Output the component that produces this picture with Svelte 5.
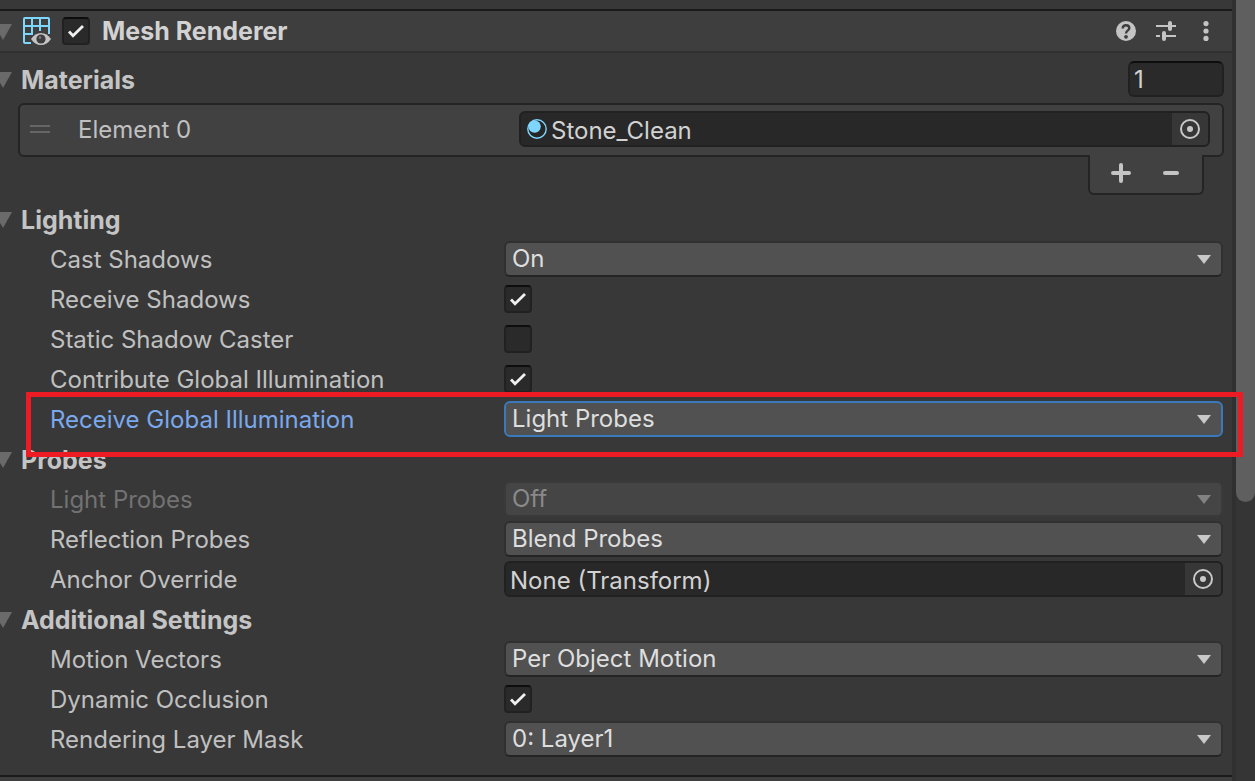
<script>
  let enabled = $state(true);
  let materialCount = $state('1');

  const sections = [
    {
      title: 'Lighting',
      rows: [
        { id: 'cast-shadows', label: 'Cast Shadows', kind: 'select', value: 'On' },
        { id: 'receive-shadows', label: 'Receive Shadows', kind: 'check', checked: true },
        { id: 'static-caster', label: 'Static Shadow Caster', kind: 'check', checked: false },
        { id: 'contribute-gi', label: 'Contribute Global Illumination', kind: 'check', checked: true },
        { id: 'receive-gi', label: 'Receive Global Illumination', kind: 'select', value: 'Light Probes', active: true }
      ]
    },
    {
      title: 'Probes',
      rows: [
        { id: 'light-probes', label: 'Light Probes', kind: 'select', value: 'Off', disabled: true },
        { id: 'reflection-probes', label: 'Reflection Probes', kind: 'select', value: 'Blend Probes' },
        { id: 'anchor-override', label: 'Anchor Override', kind: 'object', value: 'None (Transform)' }
      ]
    },
    {
      title: 'Additional Settings',
      rows: [
        { id: 'motion-vectors', label: 'Motion Vectors', kind: 'select', value: 'Per Object Motion' },
        { id: 'dynamic-occlusion', label: 'Dynamic Occlusion', kind: 'check', checked: true },
        { id: 'layer-mask', label: 'Rendering Layer Mask', kind: 'select', value: '0: Layer1' }
      ]
    }
  ];
</script>

{#snippet foldout()}
  <svg class="foldout" width="18" height="16" viewBox="0 0 18 16" aria-hidden="true">
    <path d="M0 0H18L9 16Z" fill="#6a6a6a" />
  </svg>
{/snippet}

{#snippet picker()}
  <button class="picker" type="button" aria-label="Select object">
    <svg width="20" height="20" viewBox="0 0 20 20" aria-hidden="true">
      <circle cx="10" cy="10" r="9" fill="none" stroke="#c8c8c8" stroke-width="2" />
      <circle cx="10" cy="10" r="3" fill="#c8c8c8" />
    </svg>
  </button>
{/snippet}

{#snippet tick()}
  <svg class="tick" width="18" height="14" viewBox="0 0 18 14" aria-hidden="true">
    <path d="M2 7.5L6 11.7L16 2" fill="none" stroke="#f0f0f0" stroke-width="2.8" />
  </svg>
{/snippet}

<div class="window">
  <main class="panel">
    <header class="component">
      {@render foldout()}
      <svg class="mesh" width="30" height="30" viewBox="0 0 30 30" aria-hidden="true">
        <g fill="none" stroke="#7fd6fd" stroke-width="2">
          <path d="M9 27H3Q2 27 2 26V3Q2 2 3 2H26Q27 2 27 3V18" />
          <path d="M10 2V19M18 2V15M2 10H27M2 18H11" />
        </g>
        <path d="M9 23Q13 17 19 17T29 23Q25 29 19 29T9 23Z" fill="#c4c4c4" />
        <circle cx="19" cy="23" r="4.6" fill="#3e3e3e" />
        <circle cx="18" cy="21.6" r="1.3" fill="#777" />
      </svg>
      <span class="check">
        <input id="enabled" type="checkbox" bind:checked={enabled} />
        {@render tick()}
      </span>
      <label class="title" for="enabled">Mesh Renderer</label>
      <div class="tools">
        <button type="button" aria-label="Help">
          <svg width="20" height="20" viewBox="0 0 20 20">
            <circle cx="10" cy="10" r="10" fill="#c4c4c4" />
            <path d="M6.7 7.5Q6.7 4.2 10 4.2T13.3 7.3C13.3 9.6 10 9.2 10 12.6" fill="none" stroke="#3e3e3e" stroke-width="2.4" />
            <circle cx="10" cy="15.8" r="1.9" fill="#3e3e3e" />
          </svg>
        </button>
        <button type="button" aria-label="Presets">
          <svg width="20" height="20" viewBox="0 0 20 20" stroke="#c4c4c4">
            <path d="M0 5H14M16 5H20M0 15H4M8 15H20" stroke-width="2" />
            <path d="M14 2V8M8 12V18" stroke-width="4" stroke-linecap="round" />
          </svg>
        </button>
        <button type="button" aria-label="More options">
          <svg width="20" height="20" viewBox="0 0 20 20" fill="#c4c4c4">
            <circle cx="10" cy="2.6" r="2.6" /><circle cx="10" cy="10" r="2.6" /><circle cx="10" cy="17.4" r="2.6" />
          </svg>
        </button>
      </div>
    </header>

    <section class="materials">
      <div class="heading">
        {@render foldout()}
        <h2><label for="count">Materials</label></h2>
        <input id="count" class="count" type="text" bind:value={materialCount} />
      </div>
      <div class="list">
        <svg class="grip" width="20" height="8" viewBox="0 0 20 8" aria-hidden="true">
          <path d="M0 1H20M0 7H20" stroke="#666" stroke-width="2" />
        </svg>
        <span class="element">Element 0</span>
        <div class="object">
          <svg class="ball" width="20" height="20" viewBox="0 0 20 20" aria-hidden="true">
            <circle cx="10" cy="10" r="9.2" fill="#262626" stroke="#7fd6fd" stroke-width="1.4" />
            <circle cx="7.6" cy="7.6" r="6.2" fill="#7fd6fd" />
          </svg>
          <span class="value">Stone_Clean</span>
          {@render picker()}
        </div>
      </div>
      <div class="list-footer">
        <button type="button" aria-label="Add element">
          <svg width="20" height="20" viewBox="0 0 20 20"><path d="M2 10H18M10 2V18" stroke="#c4c4c4" stroke-width="4" stroke-linecap="round" /></svg>
        </button>
        <button type="button" aria-label="Remove element">
          <svg width="20" height="20" viewBox="0 0 20 20"><path d="M4 10H16" stroke="#c4c4c4" stroke-width="4" stroke-linecap="round" /></svg>
        </button>
      </div>
    </section>

    {#each sections as section}
      <section>
        <div class="heading">
          {@render foldout()}
          <h2>{section.title}</h2>
        </div>
        {#each section.rows as row}
          <div class="row" class:active={row.active} class:disabled={row.disabled}>
            {#if row.kind === 'object'}
              <span class="label">{row.label}</span>
              <div class="object">
                <span class="value">{row.value}</span>
                {@render picker()}
              </div>
            {:else if row.kind === 'check'}
              <label class="label" for={row.id}>{row.label}</label>
              <span class="check">
                <input id={row.id} type="checkbox" checked={row.checked} />
                {@render tick()}
              </span>
            {:else}
              <label class="label" for={row.id}>{row.label}</label>
              <span class="dropdown">
                <select id={row.id} disabled={row.disabled}>
                  <option>{row.value}</option>
                </select>
                <svg class="arrow" width="14" height="9" viewBox="0 0 14 9" aria-hidden="true">
                  <path d="M0 0H14L7 9Z" fill="currentColor" />
                </svg>
              </span>
            {/if}
          </div>
        {/each}
      </section>
    {/each}
    <div class="next"></div>
  </main>
  <div class="scrollbar"><div class="thumb"></div></div>
</div>

<style>
  :global(body) {
    margin: 0;
    background: #383838;
  }
  .window {
    display: flex;
    min-height: 100vh;
    overflow: hidden;
    font-family: Inter, sans-serif;
    font-size: 24px;
    line-height: 32px;
    color: #c0c0c0;
  }
  .window * {
    box-sizing: border-box;
  }
  button, input, select {
    margin: 0;
    padding: 0;
    border: 0;
    background: none;
    font: inherit;
    color: inherit;
    appearance: none;
    outline: none;
  }
  svg {
    display: block;
    flex: none;
  }
  .panel {
    flex: 1;
    min-width: 0;
    display: flex;
    flex-direction: column;
    padding-top: 9px;
  }
  .component {
    display: flex;
    align-items: center;
    height: 44px;
    padding-right: 16px;
    border-top: 2px solid #1a1a1a;
    border-bottom: 2px solid #303030;
    background: #3e3e3e;
  }
  .foldout {
    margin: 2px 0 0 -6px;
  }
  .mesh {
    margin: 0 10px;
  }
  .title,
  h2 {
    font-size: 25px;
    font-weight: 700;
    color: #c4c4c4;
  }
  .title {
    margin-left: 12px;
    color: #d2d2d2;
  }
  .tools {
    display: flex;
    gap: 20px;
    margin-left: auto;
  }
  .check {
    position: relative;
    width: 28px;
    height: 28px;
  }
  .check input {
    display: block;
    width: 28px;
    height: 28px;
    border: 2px solid #212121;
    border-top-color: #0d0d0d;
    border-radius: 4px;
    background: #2a2a2a;
  }
  .tick {
    position: absolute;
    top: 7px;
    left: 5px;
    pointer-events: none;
    visibility: hidden;
  }
  input:checked + .tick {
    visibility: visible;
  }
  .materials {
    padding: 6px 0 4px;
  }
  .heading {
    display: flex;
    align-items: center;
    height: 40px;
    padding-right: 8px;
  }
  h2 {
    margin: 0;
    padding: 2px 0 0 9px;
  }
  .count {
    width: 96px;
    height: 36px;
    margin-left: auto;
    padding-left: 4px;
    border: 2px solid #212121;
    border-top-color: #0d0d0d;
    border-radius: 6px;
    background: #2a2a2a;
    color: #d2d2d2;
  }
  .list {
    display: flex;
    align-items: center;
    height: 54px;
    margin: 4px 8px 0 18px;
    padding: 0 12px 2px 10px;
    border: 2px solid #242424;
    border-radius: 6px;
    background: #414141;
  }
  .element {
    flex: none;
    width: 469px;
    padding: 2px 0 0 28px;
  }
  .object {
    flex: 1;
    display: flex;
    align-items: center;
    height: 36px;
    min-width: 0;
    padding-left: 4px;
    overflow: hidden;
    border: 2px solid #212121;
    border-radius: 6px;
    background: #282828;
    color: #d2d2d2;
  }
  .ball {
    margin: 0 4px 0 2px;
  }
  .value {
    flex: 1;
    padding-top: 3px;
  }
  .picker {
    display: grid;
    place-items: center;
    width: 36px;
    height: 32px;
    background: #373737;
  }
  .list-footer {
    position: relative;
    display: flex;
    gap: 30px;
    width: 116px;
    height: 40px;
    margin: -2px 28px 0 auto;
    padding: 0 0 2px 21px;
    border: 2px solid #242424;
    border-top: 0;
    border-radius: 0 0 6px 6px;
    background: #414141;
  }
  .row {
    position: relative;
    display: flex;
    align-items: center;
    height: 40px;
    padding: 0 9px 0 50px;
  }
  .label {
    flex: none;
    width: 454px;
    padding-top: 2px;
  }
  .dropdown {
    position: relative;
    flex: 1;
    min-width: 0;
    color: #dedede;
  }
  select {
    display: block;
    width: 100%;
    height: 36px;
    padding: 0 32px 2px 6px;
    border: 2px solid #303030;
    border-bottom-color: #242424;
    border-radius: 6px;
    background: #515151;
  }
  .arrow {
    position: absolute;
    top: 14px;
    right: 12px;
    color: #c8c8c8;
    pointer-events: none;
  }
  .active .label {
    color: #7ba8ec;
  }
  .active select {
    border-color: #3a79bb;
  }
  .active::after {
    content: '';
    position: absolute;
    z-index: 1;
    inset: -7px -11px -18px 26px;
    border: 5px solid #ed1c24;
    pointer-events: none;
  }
  .disabled .label {
    color: #727272;
  }
  .disabled select {
    border-color: #3a3a3a;
    background: #454545;
    color: #8a8a8a;
    opacity: 1;
  }
  .disabled .arrow {
    color: #828282;
  }
  .next {
    flex: 1;
    margin-top: 16px;
    border-top: 2px solid #1a1a1a;
    background: #3e3e3e;
  }
  .scrollbar {
    flex: none;
    width: 23px;
    border-left: 4px solid #303030;
    background: #353535;
  }
  .thumb {
    height: 502px;
    border-radius: 0 0 10px 10px;
    background: #5f5f5f;
  }
</style>
